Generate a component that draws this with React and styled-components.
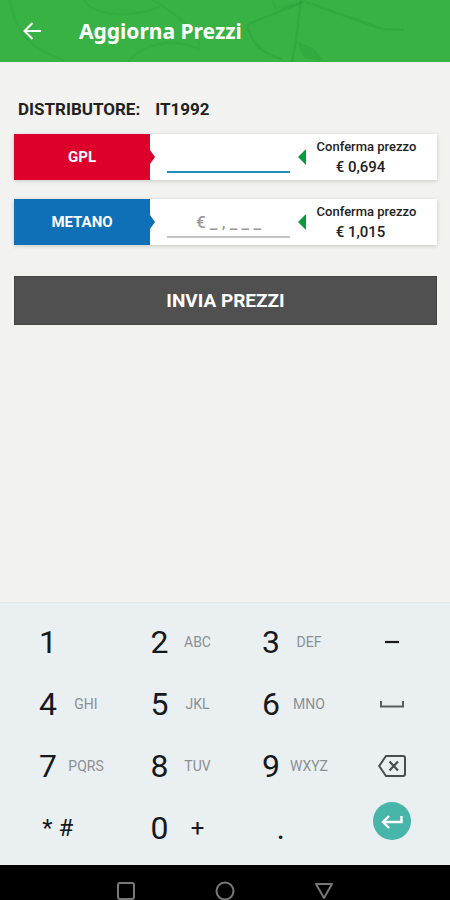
import React, { useState } from 'react';
import styled, { createGlobalStyle } from 'styled-components';

const GlobalStyle = createGlobalStyle`
  * {
    box-sizing: border-box;
  }

  body {
    margin: 0;
    background-color: #f2f2f0;
    font-family: Roboto, 'Liberation Sans', sans-serif;
    color: #222;
  }

  button, input {
    font-family: inherit;
    border: none;
    border-radius: 0;
    padding: 0;
    margin: 0;
    background: none;
    color: inherit;
  }
`;

const Screen = styled.div`
  display: flex;
  flex-direction: column;
  min-height: 100vh;
`;

const Header = styled.header`
  position: relative;
  display: flex;
  align-items: center;
  gap: 34px;
  height: 62px;
  padding: 0 18px;
  overflow: hidden;
  background-color: #38b245;
  color: white;
`;

const HeaderMap = styled.svg`
  position: absolute;
  inset: 0;
  width: 100%;
  height: 100%;
`;

const BackButton = styled.button`
  position: relative;
  display: flex;
  width: 27px;
  height: 28px;
  align-items: center;
  justify-content: center;
`;

const Title = styled.h1`
  position: relative;
  margin: 0;
  font-family: 'Noto Sans', 'Open Sans', sans-serif;
  font-size: 21px;
  font-weight: 700;
  line-height: 28px;
`;

const Content = styled.main`
  flex: 1;
  display: flex;
  flex-direction: column;
  padding: 35px 13px 24px 14px;
`;

const Station = styled.p`
  display: flex;
  gap: 15px;
  margin: 0 0 13px;
  padding-left: 4px;
  font-size: 17px;
  font-weight: 700;
  line-height: 24px;
`;

const PriceList = styled.div`
  display: flex;
  flex-direction: column;
  gap: 19px;
  margin-bottom: 31px;
`;

const PriceCard = styled.div`
  display: flex;
  height: 46px;
  background-color: white;
  box-shadow: 0 1px 4px rgba(0, 0, 0, 0.18);
`;

const FuelLabel = styled.label`
  position: relative;
  flex: 0 0 136px;
  display: flex;
  align-items: center;
  justify-content: center;
  background-color: ${(props) => props.$color};
  color: white;
  font-size: 15px;
  font-weight: 700;

  &::after {
    content: '';
    position: absolute;
    left: 100%;
    top: 50%;
    margin-top: -7px;
    border: 7px solid transparent;
    border-left: 5px solid ${(props) => props.$color};
    border-right: none;
  }
`;

const PriceInput = styled.input`
  flex: 1;
  min-width: 0;
  height: 39px;
  margin: 0 8px 0 17px;
  padding-top: 8px;
  border-bottom: 2px solid ${(props) => (props.$active ? '#238cb8' : '#c4c4c4')};
  outline: none;
  font-size: 17px;
  font-weight: 500;
  text-align: center;

  &::placeholder {
    color: #999;
    opacity: 1;
  }
`;

const Confirm = styled.div`
  flex: 0 0 139px;
  display: flex;
  align-items: center;
  padding-right: 10px;

  &::before {
    content: '';
    border: 8px solid transparent;
    border-right-color: #0a9a3c;
    border-left: none;
  }
`;

const ConfirmText = styled.div`
  flex: 1;
  font-size: 13px;
  font-weight: 500;
  line-height: 20px;
  text-align: center;
  white-space: nowrap;
`;

const ConfirmPrice = styled.div`
  padding-right: 12px;
  font-size: 15px;
`;

const SubmitButton = styled.button`
  height: 49px;
  background-color: #505050;
  border: 1px solid #444;
  color: white;
  font-size: 19px;
  font-weight: 700;
`;

const Keypad = styled.div`
  display: grid;
  grid-template-columns: repeat(4, 1fr);
  grid-auto-rows: 62px;
  padding: 8px 2px 6px;
  background-color: #eaeff2;
  border-top: 1px solid #e2e9e8;
`;

const Key = styled.button`
  display: flex;
  align-items: center;
  gap: 4px;
  padding-left: 34px;
  color: #15191c;
`;

const IconKey = styled(Key)`
  justify-content: center;
  padding-left: 0;
`;

const Digit = styled.span`
  width: 24px;
  font-size: 32px;
  line-height: 40px;
  text-align: center;
`;

const Letters = styled.span`
  width: 44px;
  color: #8b9093;
  font-size: 14px;
  text-align: center;
`;

const Symbol = styled.span`
  width: ${(props) => (props.$wide ? '44px' : 'auto')};
  font-size: 24px;
  text-align: center;
`;

const EnterCircle = styled.span`
  display: flex;
  align-items: center;
  justify-content: center;
  width: 38px;
  height: 38px;
  margin-bottom: 14px;
  border-radius: 50%;
  background-color: #47b5a9;
`;

const NavBar = styled.nav`
  display: flex;
  justify-content: center;
  gap: 79px;
  height: 35px;
  padding-top: 16px;
  overflow: hidden;
  background-color: black;
`;

const NavButton = styled.button`
  display: block;
  width: 20px;
  height: 20px;
`;

const fuels = [
  { id: 'gpl', name: 'GPL', color: '#dc002b', price: '0,694' },
  { id: 'metano', name: 'METANO', color: '#0f70b7', price: '1,015' },
];

const MapPattern = () => (
  <HeaderMap viewBox="0 0 450 62" preserveAspectRatio="xMidYMid slice" aria-hidden="true">
    <g fill="none" stroke="#259a37" strokeOpacity="0.35" strokeWidth="2.5">
      <path d="M10 0 C14 32 32 50 64 60" strokeOpacity="0.2" />
      <path d="M84 0 C92 14 124 20 160 7" strokeOpacity="0.2" />
      <path d="M152 0 C174 12 188 24 200 44" strokeOpacity="0.2" />
      <path d="M128 62 C142 44 174 36 200 50" strokeOpacity="0.2" />
      <path d="M248 24 L298 4 L306 0" />
      <path d="M301 0 L296 40 L292 62" />
      <path d="M247 24 C252 44 262 54 282 59" />
      <path d="M272 0 L276 8 L298 4" strokeOpacity="0.2" />
      <path d="M306 2 L382 29 L404 30" />
    </g>
    <path d="M297 41 L314 49 L324 61 L304 58 Z" fill="#259a37" fillOpacity="0.35" />
  </HeaderMap>
);

const BackIcon = () => (
  <svg width="20" height="20" viewBox="0 0 20 20" fill="none" stroke="white" strokeWidth="2">
    <path d="M19 10 H3 M10.5 2 L2.5 10 L10.5 18" />
  </svg>
);

const MinusIcon = () => (
  <svg width="26" height="26" viewBox="0 0 26 26" fill="none" stroke="#15191c" strokeWidth="2.2">
    <path d="M6 13 H20" />
  </svg>
);

const SpaceIcon = () => (
  <svg width="26" height="26" viewBox="0 0 26 26" fill="none" stroke="#555d61" strokeWidth="2">
    <path d="M2 10 V15.5 H24 V10" />
  </svg>
);

const BackspaceIcon = () => (
  <svg width="28" height="24" viewBox="0 0 28 24" fill="none" stroke="#454d51" strokeWidth="2">
    <path d="M8 2 H25 Q27 2 27 4 V20 Q27 22 25 22 H8 L1.2 12 Z" />
    <path d="M11.5 7.5 L20 16.5 M20 7.5 L11.5 16.5" strokeWidth="2.2" />
  </svg>
);

const EnterIcon = () => (
  <svg width="24" height="20" viewBox="0 0 24 20" fill="none" stroke="white" strokeWidth="2.4">
    <path d="M21.5 5 V11 H3 M9 5 L3 11 L9 17" />
  </svg>
);

const digitKeys = {
  1: '',
  2: 'ABC',
  3: 'DEF',
  4: 'GHI',
  5: 'JKL',
  6: 'MNO',
  7: 'PQRS',
  8: 'TUV',
  9: 'WXYZ',
};

const App = () => {
  const [active, setActive] = useState('gpl');
  const [prices, setPrices] = useState({ gpl: '', metano: '' });

  const setPrice = (id, value) => setPrices({ ...prices, [id]: value });
  const type = (char) => setPrice(active, prices[active] + char);
  const erase = () => setPrice(active, prices[active].slice(0, -1));
  const next = () => setActive(active === 'gpl' ? 'metano' : 'gpl');

  const renderDigit = (digit) => (
    <Key key={digit} type="button" onClick={() => type(digit)}>
      <Digit>{digit}</Digit>
      {digitKeys[digit] && <Letters>{digitKeys[digit]}</Letters>}
    </Key>
  );

  return (
    <Screen>
      <GlobalStyle />
      <Header>
        <MapPattern />
        <BackButton type="button" aria-label="Indietro">
          <BackIcon />
        </BackButton>
        <Title>Aggiorna Prezzi</Title>
      </Header>

      <Content>
        <Station>
          <span>DISTRIBUTORE:</span>
          <span>IT1992</span>
        </Station>
        <PriceList>
          {fuels.map((fuel) => (
            <PriceCard key={fuel.id}>
              <FuelLabel htmlFor={fuel.id} $color={fuel.color}>{fuel.name}</FuelLabel>
              <PriceInput
                id={fuel.id}
                inputMode="none"
                autoComplete="off"
                placeholder={active === fuel.id ? '' : '€ _ , _ _ _'}
                value={prices[fuel.id]}
                $active={active === fuel.id}
                onFocus={() => setActive(fuel.id)}
                onChange={(e) => setPrice(fuel.id, e.target.value)}
              />
              <Confirm>
                <ConfirmText>
                  Conferma prezzo
                  <ConfirmPrice>€ {fuel.price}</ConfirmPrice>
                </ConfirmText>
              </Confirm>
            </PriceCard>
          ))}
        </PriceList>
        <SubmitButton type="button">INVIA PREZZI</SubmitButton>
      </Content>

      <Keypad>
        {['1', '2', '3'].map(renderDigit)}
        <IconKey type="button" aria-label="Meno" onClick={() => type('-')}>
          <MinusIcon />
        </IconKey>
        {['4', '5', '6'].map(renderDigit)}
        <IconKey type="button" aria-label="Spazio" onClick={() => type(' ')}>
          <SpaceIcon />
        </IconKey>
        {['7', '8', '9'].map(renderDigit)}
        <IconKey type="button" aria-label="Cancella" onClick={erase}>
          <BackspaceIcon />
        </IconKey>
        <IconKey type="button">
          <Symbol>* #</Symbol>
        </IconKey>
        <Key type="button" onClick={() => type('0')}>
          <Digit>0</Digit>
          <Symbol $wide>+</Symbol>
        </Key>
        <IconKey type="button" onClick={() => type('.')}>
          <Digit>.</Digit>
        </IconKey>
        <IconKey type="button" aria-label="Invio" onClick={next}>
          <EnterCircle>
            <EnterIcon />
          </EnterCircle>
        </IconKey>
      </Keypad>

      <NavBar>
        <NavButton type="button" aria-label="Recenti">
          <svg width="20" height="20" viewBox="0 0 20 20" fill="none" stroke="#777" strokeWidth="2">
            <rect x="2" y="2" width="16" height="16" rx="2" />
          </svg>
        </NavButton>
        <NavButton type="button" aria-label="Home">
          <svg width="20" height="20" viewBox="0 0 20 20" fill="none" stroke="#777" strokeWidth="2">
            <circle cx="10" cy="10" r="8.5" />
          </svg>
        </NavButton>
        <NavButton type="button" aria-label="Chiudi">
          <svg width="20" height="20" viewBox="0 0 20 20" fill="none" stroke="#777" strokeWidth="2" strokeLinejoin="round">
            <path d="M2 3 H18 L10 17 Z" />
          </svg>
        </NavButton>
      </NavBar>
    </Screen>
  );
};

export default App;
